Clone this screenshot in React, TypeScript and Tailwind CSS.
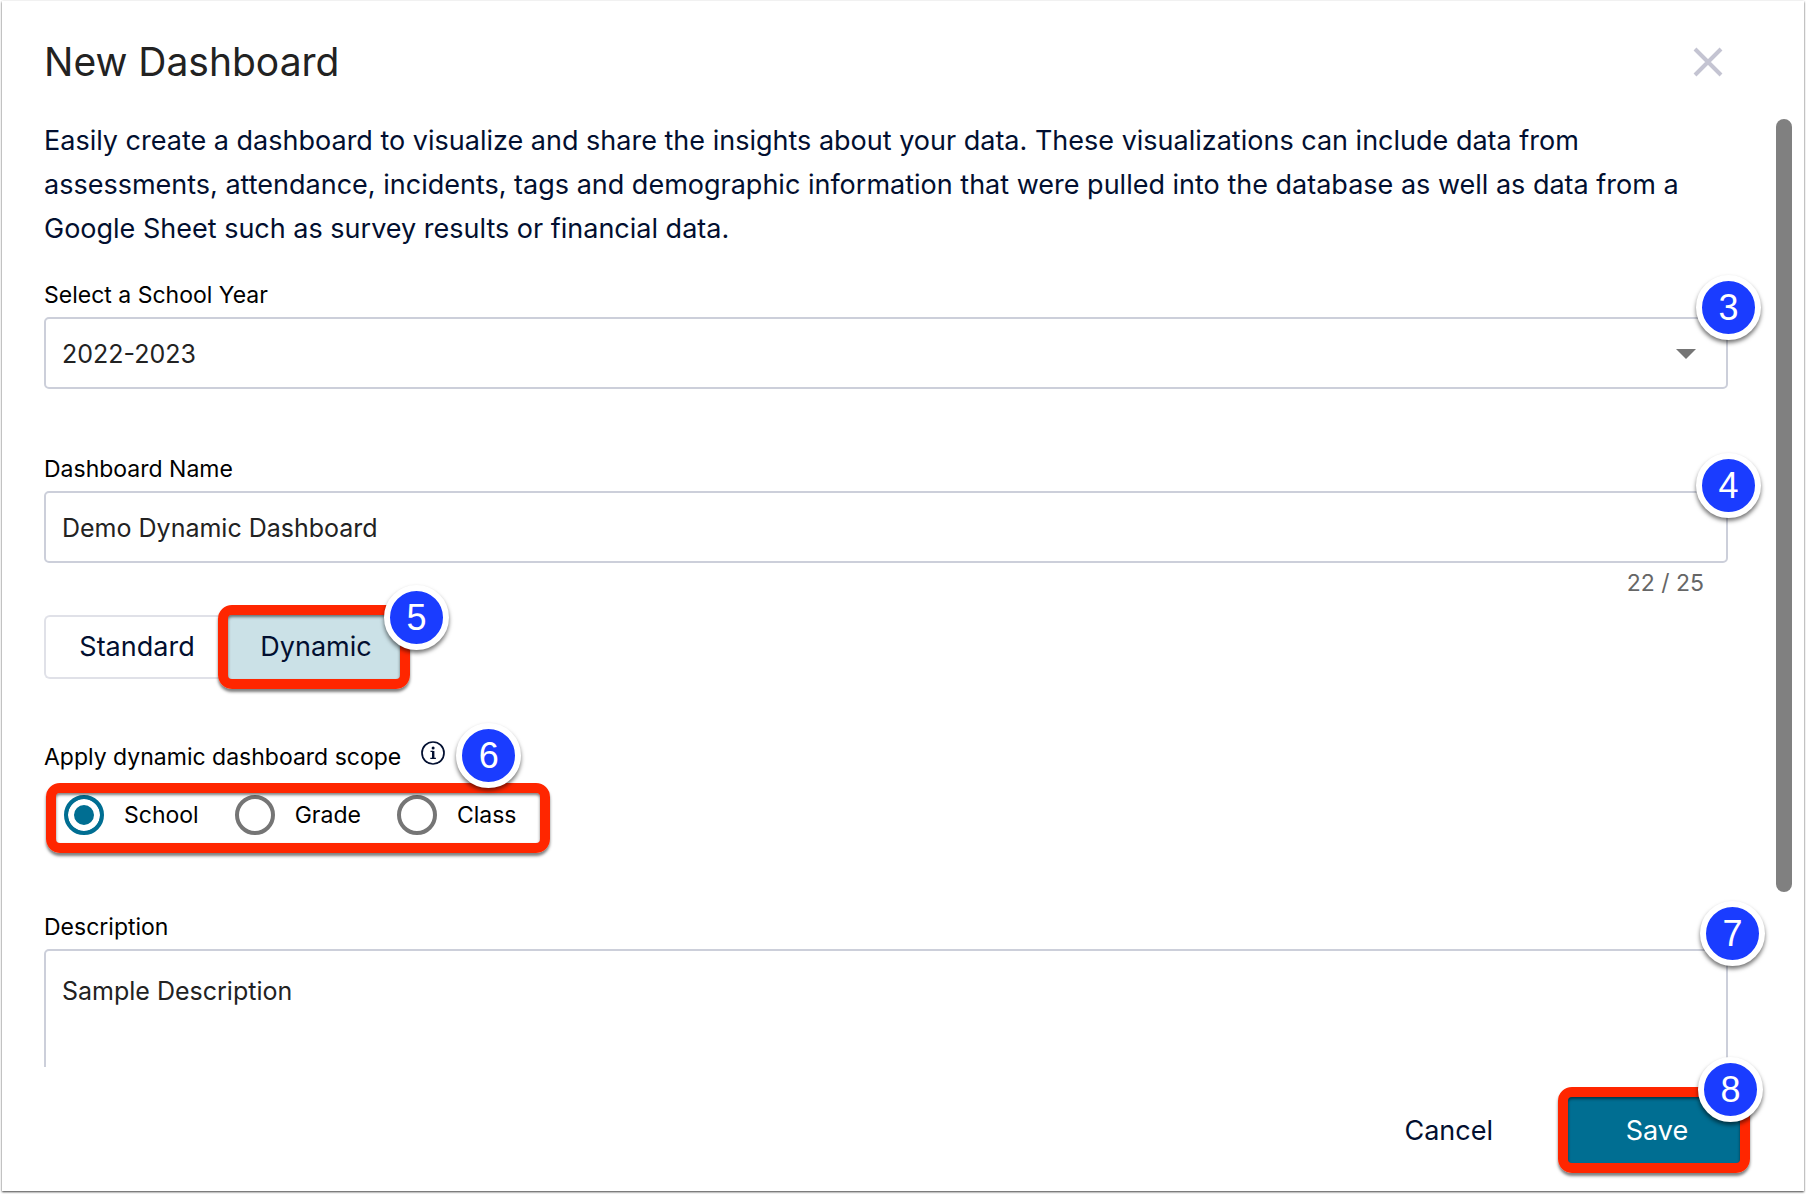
import { useState } from 'react';

const SCOPES = ['School', 'Grade', 'Class'];
const NAME_LIMIT = 25;

function Step({ number, className }: { number: number; className: string }) {
  return (
    <span
      className={`absolute z-10 flex h-[65px] w-[65px] items-center justify-center rounded-full border-[6px] border-white bg-[#1a3cff] font-['Liberation_Sans',sans-serif] text-[36px] leading-none font-normal text-white shadow-[0_3px_4px_rgba(0,0,0,0.55)] ${className}`}
    >
      {number}
    </span>
  );
}

function Highlight() {
  return (
    <span className="pointer-events-none absolute -inset-2.5 rounded-[14px] border-10 border-[#ff2600] shadow-[0_3px_3px_rgba(0,0,0,0.5)]">
      <span className="absolute inset-0 rounded-[4px] shadow-[inset_0_2px_3px_rgba(0,0,0,0.5)]" />
    </span>
  );
}

export default function App() {
  const [year, setYear] = useState('2022-2023');
  const [name, setName] = useState('Demo Dynamic Dashboard');
  const [scope, setScope] = useState('School');
  const [description, setDescription] = useState('Sample Description');

  return (
    <div className="h-screen bg-white px-0.5 pt-px pb-[3px] font-[Inter,sans-serif]">
      <div role="dialog" aria-labelledby="dialog-title" className="flex h-full flex-col bg-white shadow-[0_1px_2px_rgba(0,0,0,0.75)]">
        {/* Header */}
        <header className="flex shrink-0 items-center justify-between pt-[38px] pr-19 pb-[34px] pl-[42px]">
          <h1 id="dialog-title" className="text-[39px] leading-[46px] text-[#222222]">New Dashboard</h1>
          <button aria-label="Close" className="p-1">
            <svg className="h-8 w-8 text-[#c4c4d2]" viewBox="0 0 32 32" fill="none" stroke="currentColor" strokeWidth="4">
              <path d="M3 3l26 26M29 3L3 29" />
            </svg>
          </button>
        </header>

        {/* Scrollable form */}
        <div className="flex min-h-0 flex-1">
          <form className="min-w-0 flex-1 overflow-y-auto pr-12 pl-[42px] [scrollbar-width:none]">
            <p className="text-[27px] leading-[44px] text-[#020f30]">
              Easily create a dashboard to visualize and share the insights about your data. These visualizations can include data from
              assessments, attendance, incidents, tags and demographic information that were pulled into the database as well as data from a
              Google Sheet such as survey results or financial data.
            </p>

            <label htmlFor="year" className="mt-[30px] block text-[23px] leading-7 text-black">Select a School Year</label>
            <div className="relative mt-2">
              <select
                id="year"
                value={year}
                onChange={(e) => setYear(e.target.value)}
                className="block h-[72px] w-full appearance-none rounded-[5px] border-2 border-[#cccfda] bg-white px-4 pt-1 text-[25px] text-[#222222]"
              >
                <option>2022-2023</option>
                <option>2021-2022</option>
              </select>
              <svg className="pointer-events-none absolute top-8 right-8 h-2.5 w-5" viewBox="0 0 20 10" fill="#757575">
                <path d="M0 0h20L10 10z" />
              </svg>
              <Step number={3} className="-top-[42px] -right-[33px]" />
            </div>

            <label htmlFor="name" className="mt-[66px] block text-[23px] leading-7 text-black">Dashboard Name</label>
            <div className="relative mt-2">
              <input
                id="name"
                value={name}
                maxLength={NAME_LIMIT}
                onChange={(e) => setName(e.target.value)}
                className="block h-[72px] w-full rounded-[5px] border-2 border-[#cccfda] bg-white px-4 pt-0.5 text-[25px] text-[#222222]"
              />
              <Step number={4} className="-top-[38px] -right-[33px]" />
            </div>
            <p className="mt-1.5 pr-6 text-right text-[23px] leading-7 text-[#666666]">
              {name.length} / {NAME_LIMIT}
            </p>

            <div className="mt-[18px] flex text-[27px] text-[#020f30]">
              <button type="button" className="h-16 w-[184px] rounded-l-[6px] border-2 border-r-0 border-[#e0e1e8]">
                Standard
              </button>
              <div className="relative">
                <button type="button" aria-pressed="true" className="h-16 w-[172px] bg-[#cbe1e7] pl-1">
                  Dynamic
                </button>
                <Highlight />
                <Step number={5} className="-top-[30px] -right-[49px]" />
              </div>
            </div>

            <fieldset className="mt-16">
              <legend className="relative flex gap-5 text-[23px] leading-7 text-black">
                Apply dynamic dashboard scope
                <svg className="-mt-0.5 h-6 w-6 text-[#020f30]" viewBox="0 0 24 24" fill="none" stroke="currentColor">
                  <circle cx="12" cy="12" r="11" strokeWidth="1.700" />
                  <path d="M12.200 10v7" strokeWidth="2.400" />
                  <path d="M9.500 10.300h2.700M9.300 17.300h5.600" strokeWidth="1.300" />
                  <circle cx="12.100" cy="6.900" r="1.500" fill="currentColor" stroke="none" />
                </svg>
                <Step number={6} className="-top-5 -right-19" />
              </legend>
              <div className="relative mt-[22px] ml-3 flex h-[50px] w-[484px] items-start gap-9 pt-0.5 pl-2 text-[23px] text-black">
                {SCOPES.map((item) => (
                  <label key={item} className="flex items-center gap-5">
                    <input
                      type="radio"
                      name="scope"
                      checked={scope === item}
                      onChange={() => setScope(item)}
                      className="h-10 w-10 shrink-0 appearance-none rounded-full border-4 border-[#757575] bg-white checked:border-[#006e92] checked:bg-[#006e92] checked:shadow-[inset_0_0_0_6px_white]"
                    />
                    {item}
                  </label>
                ))}
                <Highlight />
              </div>
            </fieldset>

            <label htmlFor="description" className="mt-[70px] block text-[23px] leading-7 text-black">Description</label>
            <div className="relative mt-2">
              <textarea
                id="description"
                value={description}
                onChange={(e) => setDescription(e.target.value)}
                className="block h-44 w-full resize-none rounded-[5px] border-2 border-[#cccfda] bg-white px-4 py-6 text-[25px] leading-8 text-[#222222]"
              />
              <Step number={7} className="-top-12 -right-[37px]" />
            </div>
          </form>
          <div className="mr-3 w-4 shrink-0">
            <div className="h-[calc(100%-175px)] rounded-full bg-[#808080]" />
          </div>
        </div>

        {/* Actions */}
        <footer className="flex h-[124px] shrink-0 items-center justify-end gap-[75px] pt-0.5 pr-16 text-[27px]">
          <button className="pt-0.5 text-[#020f30]">Cancel</button>
          <div className="relative">
            <button className="h-[66px] w-[172px] bg-[#006e92] pt-0.5 pl-1.5 text-white">Save</button>
            <Highlight />
            <Step number={8} className="-top-10 -right-[23px]" />
          </div>
        </footer>
      </div>
    </div>
  );
}
